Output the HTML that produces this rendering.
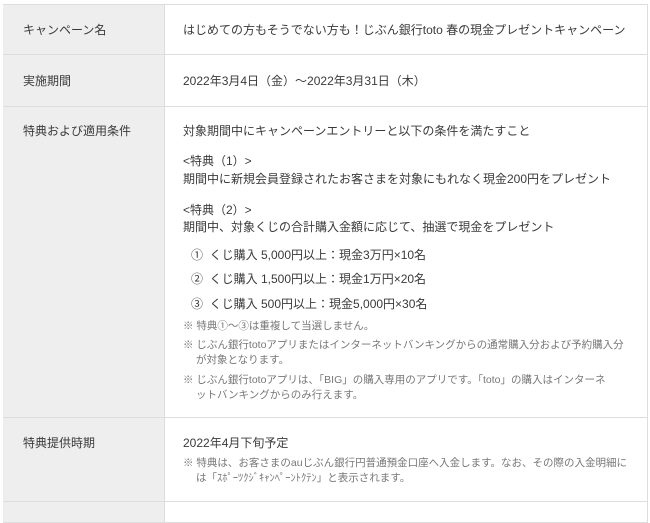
<!DOCTYPE html>
<html><head><meta charset="utf-8"><style>
body{margin:0;background:#fff;width:650px;height:504px;overflow:hidden;font-family:"Liberation Sans","Noto Sans CJK JP",sans-serif;color:#3a3a3a;}
.t{position:absolute;left:3px;top:4px;width:644px;border-top:1px solid #ddd;border-right:1px solid #ddd;}
.r{position:relative;border-bottom:1px solid #ddd;}
.l{position:absolute;left:0;top:0;bottom:0;width:161px;background:#eee;border-right:1px solid #ddd;}
.a{position:absolute;font-size:12px;white-space:nowrap;line-height:16px;}
.n{position:absolute;font-size:10.5px;color:#777;white-space:nowrap;line-height:14px;}
</style></head><body>
<div class="t">
<div class="r" style="height:49px"><div class="l"></div><div class="a" style="left:20px;top:17px">キャンペーン名</div><div class="a" style="left:180px;top:17px">はじめての方もそうでない方も！じぶん銀行toto 春の現金プレゼントキャンペーン</div></div>
<div class="r" style="height:51px"><div class="l"></div><div class="a" style="left:20px;top:18px">実施期間</div><div class="a" style="left:180px;top:18px">2022年3月4日（金）～2022年3月31日（木）</div></div>
<div class="r" style="height:310px"><div class="l"></div>
<div class="a" style="left:20px;top:16px">特典および適用条件</div>
<div class="a" style="left:180px;top:16px">対象期間中にキャンペーンエントリーと以下の条件を満たすこと</div>
<div class="a" style="left:180px;top:46px">&lt;特典（1）&gt;</div>
<div class="a" style="left:180px;top:64px">期間中に新規会員登録されたお客さまを対象にもれなく現金200円をプレゼント</div>
<div class="a" style="left:180px;top:95px">&lt;特典（2）&gt;</div>
<div class="a" style="left:180px;top:112px">期間中、対象くじの合計購入金額に応じて、抽選で現金をプレゼント</div>
<div class="a" style="left:188px;top:140px">①&nbsp; くじ購入 5,000円以上：現金3万円×10名</div>
<div class="a" style="left:188px;top:164px">②&nbsp; くじ購入 1,500円以上：現金1万円×20名</div>
<div class="a" style="left:188px;top:189px">③&nbsp; くじ購入 500円以上：現金5,000円×30名</div>
<div class="n" style="left:180px;top:212px">※ 特典①～③は重複して当選しません。</div>
<div class="n" style="left:180px;top:231px">※ じぶん銀行totoアプリまたはインターネットバンキングからの通常購入分および予約購入分</div>
<div class="n" style="left:193px;top:246px">が対象となります。</div>
<div class="n" style="left:180px;top:266px">※ じぶん銀行totoアプリは、「BIG」の購入専用のアプリです。「toto」の購入はインターネ</div>
<div class="n" style="left:193px;top:281px">ットバンキングからのみ行えます。</div>
</div>
<div class="r" style="height:83px"><div class="l"></div>
<div class="a" style="left:20px;top:17px">特典提供時期</div>
<div class="a" style="left:180px;top:17px">2022年4月下旬予定</div>
<div class="n" style="left:180px;top:38px">※ 特典は、お客さまのauじぶん銀行円普通預金口座へ入金します。なお、その際の入金明細に</div>
<div class="n" style="left:193px;top:53px">は「ｽﾎﾟｰﾂｸｼﾞｷｬﾝﾍﾟｰﾝﾄｸﾃﾝ」と表示されます。</div>
</div>
<div class="r" style="height:20px"><div class="l"></div></div>
</div>
</body></html>
